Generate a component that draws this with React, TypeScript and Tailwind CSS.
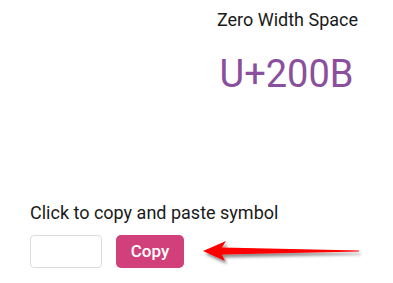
export default function App() {
  return (
    <div className="w-[393px] h-[283px] bg-white font-['Roboto',sans-serif] text-[#1a1a1a] overflow-hidden">
      {/* Symbol heading */}
      <div className="ml-[180px] pt-[8px] flex flex-col items-center">
        <div className="text-[18px] leading-[24px] pl-[2px]">Zero Width Space</div>
        <div className="mt-[21px] text-[38px] leading-[42px] text-[#8a4f9d]">U+200B</div>
      </div>

      {/* Copy section */}
      <div className="mt-[106px] pl-[30px]">
        <p className="text-[18px] leading-[24px]">Click to copy and paste symbol</p>
        <div className="mt-[10px] flex items-center">
          <input
            type="text"
            readOnly
            value={"\u200B"}
            className="w-[72px] h-[33px] border border-[#dcdcdc] rounded-[4px] bg-white outline-none"
          />
          <button className="ml-[14px] w-[68px] h-[33px] rounded-[5px] bg-[#d1407a] text-white text-[17px] font-medium">
            Copy
          </button>
          <svg width="166" height="30" viewBox="0 0 166 30" className="ml-[15px] shrink-0">
            <defs>
              <filter id="sh" x="-10%" y="-50%" width="120%" height="200%">
                <feDropShadow dx="2" dy="3" stdDeviation="1.6" floodColor="#000" floodOpacity="0.45" />
              </filter>
            </defs>
            <polygon
              points="4,14 27,4 23,10.5 160,13.6 160,14.4 23,17.5 26,24"
              fill="#ff0000"
              filter="url(#sh)"
            />
          </svg>
        </div>
      </div>
    </div>
  );
}
